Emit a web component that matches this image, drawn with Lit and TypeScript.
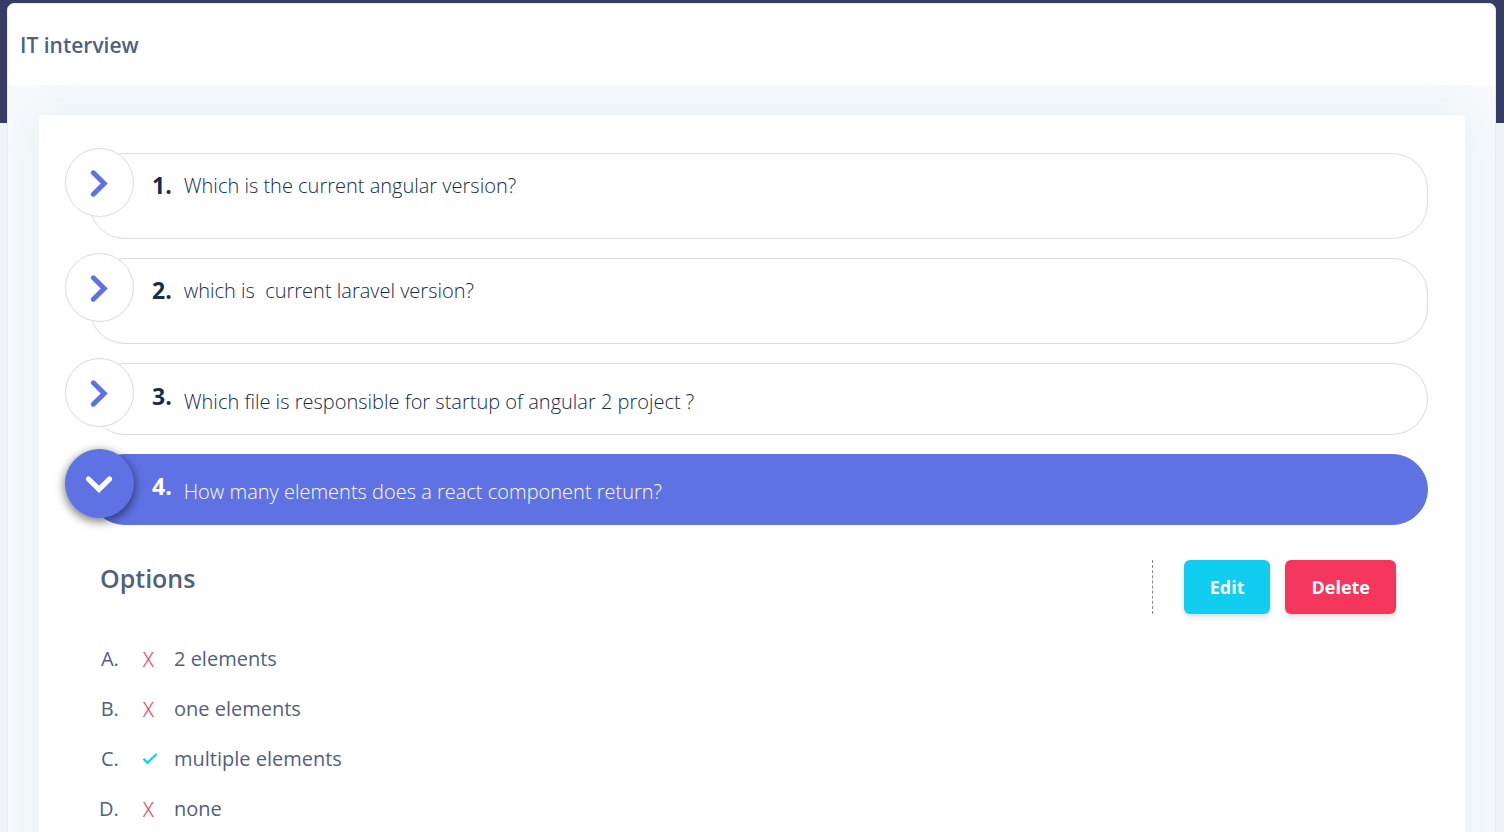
import { LitElement, html, css, svg } from "lit";
import { customElement, property, state } from "lit/decorators.js";
import { classMap } from "lit/directives/class-map.js";

interface Option {
  text: string;
  correct: boolean;
}

interface Question {
  text: string;
  plain: boolean;
  options: Option[];
}

const QUESTIONS: Question[] = [
  { text: "Which is the current angular version?", plain: false, options: [] },
  { text: "which is\u00a0 current laravel version?", plain: false, options: [] },
  { text: "Which file is responsible for startup of angular 2 project ?", plain: true, options: [] },
  {
    text: "How many elements does a react component return?",
    plain: true,
    options: [
      { text: "2 elements", correct: false },
      { text: "one elements", correct: false },
      { text: "multiple elements", correct: true },
      { text: "none", correct: false },
    ],
  },
];

const chevronRight = svg`<path d="M12.3 8.8 L23.2 19.5 L12.3 30.2" />`;
const chevronDown = svg`<path d="M7.3 13.9 L18 24.4 L28.7 13.9" />`;

@customElement("question-item")
export class QuestionItem extends LitElement {
  static styles = css`
    :host {
      display: block;
    }
    * {
      box-sizing: border-box;
    }
    .bar {
      position: relative;
      display: flex;
      align-items: flex-start;
      gap: 12px;
      margin-left: 24px;
      padding: 14px 32px 34px 62px;
      border: 1px solid #dadae0;
      border-radius: 36px;
      color: #172b4d;
    }
    .plain {
      padding-top: 15px;
      padding-bottom: 15px;
    }
    .open {
      padding-top: 14px;
      border-color: #5e72e4;
      background: #5e72e4;
      color: #fff;
    }
    .toggle {
      position: absolute;
      top: -6px;
      left: -25px;
      display: grid;
      place-items: center;
      width: 69px;
      height: 69px;
      padding: 0;
      border: 1px solid #dadae0;
      border-radius: 50%;
      background: #fff;
      color: #5e72e4;
      cursor: pointer;
    }
    .open .toggle {
      border-color: #5e72e4;
      background: #5e72e4;
      color: #fff;
      box-shadow: 0 3px 10px 1px rgba(0, 0, 0, 0.5);
    }
    .icon {
      width: 38px;
      height: 38px;
      fill: none;
      stroke: currentColor;
      stroke-width: 5;
      stroke-linecap: round;
      stroke-linejoin: miter;
    }
    .number {
      font-size: 23px;
      line-height: 34px;
      font-weight: 700;
    }
    .text {
      margin: 0;
      font-size: 20px;
      line-height: 36px;
      font-weight: 300;
    }
    .plain .text {
      padding-top: 6px;
      line-height: 34px;
    }
    .details {
      display: flex;
      justify-content: space-between;
      align-items: flex-start;
      padding: 35px 32px 0 35px;
    }
    .title {
      margin: 0;
      font-size: 25px;
      line-height: 36px;
      font-weight: 600;
    }
    .options {
      margin: 48px 0 0;
      padding: 0 0 0 24px;
      list-style: upper-alpha;
      font-size: 20px;
      line-height: 30px;
    }
    .option {
      margin-bottom: 20px;
      padding-left: 18px;
    }
    .answer {
      display: grid;
      grid-template-columns: 32px auto;
      align-items: baseline;
    }
    .wrong {
      align-self: start;
      padding: 1px 0 0 1px;
      line-height: 29px;
      color: #f5365c;
      font-weight: 300;
      -webkit-text-stroke: 0.2px #f5365c;
    }
    .check {
      align-self: center;
      width: 16px;
      height: 16px;
      fill: none;
      stroke: #11cdef;
      stroke-width: 2.2;
    }
    .actions {
      display: flex;
      gap: 15px;
      padding-left: 31px;
      border-left: 1px dashed #7d88a3;
    }
    .button {
      padding: 0 26px;
      border: 0;
      border-radius: 6px;
      color: #fff;
      font: 700 18px/54px "Open Sans", sans-serif;
      box-shadow: 0 4px 6px rgba(50, 50, 93, 0.11), 0 1px 3px rgba(0, 0, 0, 0.08);
      cursor: pointer;
    }
    .edit {
      background: #11cdef;
    }
    .delete {
      background: #f5365c;
    }
  `;

  @property({ type: Object }) question!: Question;
  @property({ type: Number }) number = 1;
  @property({ type: Boolean }) expanded = false;

  private toggle() {
    this.dispatchEvent(new CustomEvent("toggle-question"));
  }

  private renderDetails() {
    return html`
      <div class="details">
        <div>
          <h3 class="title">Options</h3>
          <ol class="options">
            ${this.question.options.map(
              (option) => html`
                <li class="option">
                  <div class="answer">
                    ${option.correct
                      ? html`<svg class="check" viewBox="0 0 16 16" aria-hidden="true">
                          <path d="M1.4 7.8 L5.4 11.8 L14.6 3" />
                        </svg>`
                      : html`<span class="wrong">X</span>`}
                    <span>${option.text}</span>
                  </div>
                </li>
              `
            )}
          </ol>
        </div>
        <div class="actions">
          <button class="button edit" type="button">Edit</button>
          <button class="button delete" type="button">Delete</button>
        </div>
      </div>
    `;
  }

  render() {
    const id = `question-${this.number}`;
    return html`
      <div class=${classMap({ bar: true, plain: this.question.plain, open: this.expanded })}>
        <button
          class="toggle"
          type="button"
          aria-expanded=${this.expanded ? "true" : "false"}
          aria-labelledby=${id}
          @click=${this.toggle}
        >
          <svg class="icon" viewBox="0 0 38 38" aria-hidden="true">
            ${this.expanded ? chevronDown : chevronRight}
          </svg>
        </button>
        <span class="number">${this.number}.</span>
        <p class="text" id=${id}>${this.question.text}</p>
      </div>
      ${this.expanded ? this.renderDetails() : null}
    `;
  }
}

@customElement("app-root")
export class AppRoot extends LitElement {
  static styles = css`
    :host {
      display: block;
      box-sizing: border-box;
      height: 100vh;
      overflow: hidden;
      padding: 3px 8px 0 7px;
      background: linear-gradient(#363d64 123px, #f0f2f8 123px);
      color: #525f7f;
      font-family: "Open Sans", sans-serif;
    }
    .card {
      border: 1px solid #e9ecf3;
      border-radius: 7px;
      overflow: hidden;
      background: #f8fafc;
    }
    .header {
      padding: 25px 12px 23px;
      background: #fff;
    }
    .heading {
      margin: 0;
      font-size: 21px;
      line-height: 33px;
      font-weight: 600;
    }
    .body {
      padding: 30px;
      padding-left: 31px;
      overflow: hidden;
    }
    .panel {
      display: grid;
      gap: 19px;
      padding: 38px 37px 38px 26px;
      border-radius: 4px;
      background: #fff;
      box-shadow: 0 0 40px 6px rgba(220, 233, 241, 0.5);
    }
  `;

  @state() private openIndex = 3;

  private toggle(index: number) {
    this.openIndex = this.openIndex === index ? -1 : index;
  }

  render() {
    return html`
      <main class="card">
        <header class="header">
          <h2 class="heading">IT interview</h2>
        </header>
        <div class="body">
          <section class="panel">
            ${QUESTIONS.map(
              (question, index) => html`
                <question-item
                  .question=${question}
                  .number=${index + 1}
                  .expanded=${this.openIndex === index}
                  @toggle-question=${() => this.toggle(index)}
                ></question-item>
              `
            )}
          </section>
        </div>
      </main>
    `;
  }
}
